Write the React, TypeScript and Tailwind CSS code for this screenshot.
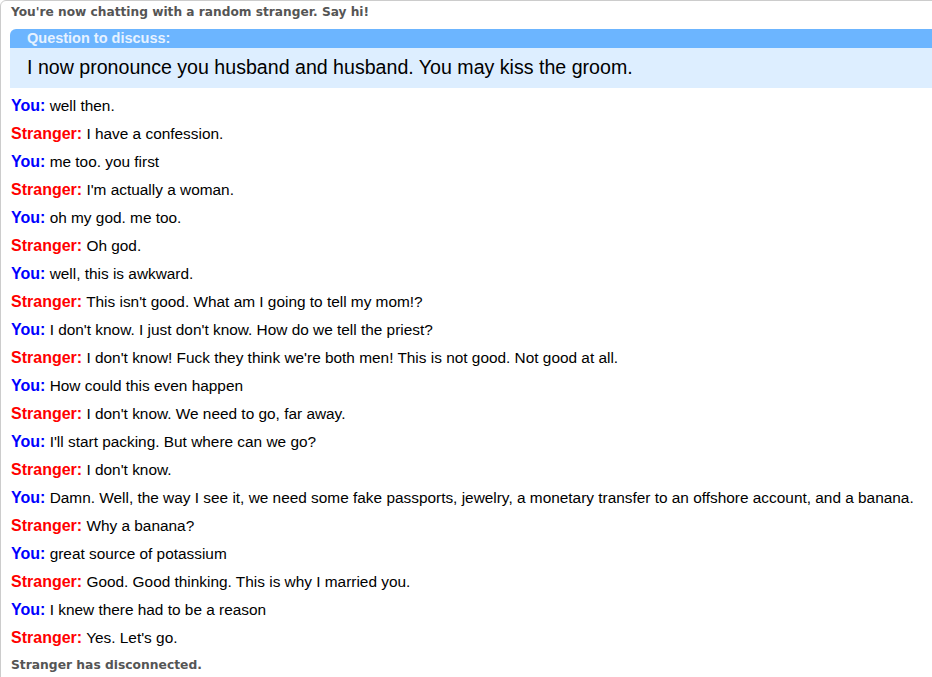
import React from "react";

type Msg = [boolean, string];

const msgs: Msg[] = [
  [true, "well then."],
  [false, "I have a confession."],
  [true, "me too. you first"],
  [false, "I'm actually a woman."],
  [true, "oh my god. me too."],
  [false, "Oh god."],
  [true, "well, this is awkward."],
  [false, "This isn't good. What am I going to tell my mom!?"],
  [true, "I don't know. I just don't know. How do we tell the priest?"],
  [false, "I don't know! Fuck they think we're both men! This is not good. Not good at all."],
  [true, "How could this even happen"],
  [false, "I don't know. We need to go, far away."],
  [true, "I'll start packing. But where can we go?"],
  [false, "I don't know."],
  [true, "Damn. Well, the way I see it, we need some fake passports, jewelry, a monetary transfer to an offshore account, and a banana."],
  [false, "Why a banana?"],
  [true, "great source of potassium"],
  [false, "Good. Good thinking. This is why I married you."],
  [true, "I knew there had to be a reason"],
  [false, "Yes. Let's go."],
];

export default function App() {
  return (
    <div className="w-[932px] h-[677px] overflow-hidden bg-white">
      <div className="w-[980px] border border-[#cccccc] rounded-[6px] pl-[9px] pb-[40px]" style={{ fontFamily: "Arial, 'Liberation Sans', sans-serif" }}>
        <div className="leading-[22px] text-[12.2px] font-bold text-[#555555] pl-[1px]" style={{ fontFamily: "'DejaVu Sans', Verdana, sans-serif" }}>
          You're now chatting with a random stranger. Say hi!
        </div>
        <div className="mt-[6px] rounded-tl-[6px] overflow-hidden">
          <div className="h-[19px] bg-[#6cb5ff] pl-[17px] text-[14.5px] font-bold leading-[19px] text-[#e6f2ff]">
            Question to discuss:
          </div>
          <div className="h-[40px] bg-[#ddeeff] pl-[17px] text-[19.6px] leading-[39px] text-black">
            I now pronounce you husband and husband. You may kiss the groom.
          </div>
        </div>
        <div className="mt-[4px] pl-[1px]">
          {msgs.map(([you, text], i) => (
            <div key={i} className="leading-[28px] text-[15.4px] text-black whitespace-nowrap">
              <span className={you ? "font-bold text-[16px] text-[#0000ff]" : "font-bold text-[16px] text-[#ff0000]"}>{you ? "You:" : "Stranger:"}</span>{" "}
              {text}
            </div>
          ))}
        </div>
        <div className="leading-[26px] text-[12.3px] font-bold text-[#555555] pl-[1px]" style={{ fontFamily: "'DejaVu Sans', Verdana, sans-serif" }}>
          Stranger has disconnected.
        </div>
      </div>
    </div>
  );
}
